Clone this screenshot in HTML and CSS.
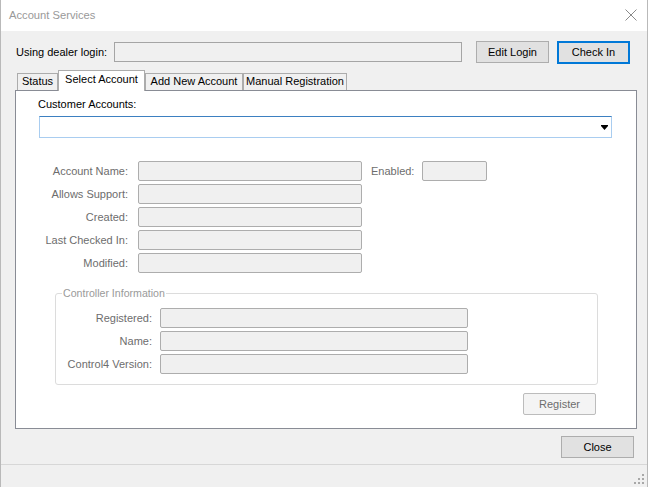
FILE: index.html
```html
<!DOCTYPE html>
<html>
<head>
<meta charset="utf-8">
<link rel="stylesheet" href="styles.css">
</head>
<body>
<div class="window">
  <div class="titlebar">
    <span class="title">Account Services</span>
    <svg class="close-x" width="12" height="12" viewBox="0 0 12 12"><path d="M0.5 0.5 L11.5 11.5 M11.5 0.5 L0.5 11.5" stroke="#8a8a8a" stroke-width="1" fill="none"/></svg>
  </div>
  <div class="client">
    <div class="login-row">
      <span class="login-label">Using dealer login:</span>
      <div class="login-box"></div>
      <button class="btn btn-edit">Edit Login</button>
      <button class="btn btn-default">Check In</button>
    </div>
    <div class="tabs">
      <div class="tab tab-status">Status</div>
      <div class="tab active">Select Account</div>
      <div class="tab tab-add">Add New Account</div>
      <div class="tab tab-manual">Manual Registration</div>
    </div>
    <div class="panel">
      <div class="cust-label">Customer Accounts:</div>
      <div class="combo">
        <svg class="combo-arrow" width="7" height="5" viewBox="0 0 7 5"><path d="M0 0 H7 V1 L3.5 5 L0 1 Z" fill="#000"/></svg>
      </div>
      <div class="fields">
        <div class="frow">
          <span class="flabel">Account Name:</span>
          <div class="dbox wide"></div>
          <span class="flabel-enabled">Enabled:</span>
          <div class="dbox narrow"></div>
        </div>
        <div class="frow"><span class="flabel">Allows Support:</span><div class="dbox wide"></div></div>
        <div class="frow"><span class="flabel">Created:</span><div class="dbox wide"></div></div>
        <div class="frow"><span class="flabel">Last Checked In:</span><div class="dbox wide"></div></div>
        <div class="frow"><span class="flabel">Modified:</span><div class="dbox wide"></div></div>
      </div>
      <fieldset class="group">
        <legend>Controller Information</legend>
        <div class="grow"><span class="glabel">Registered:</span><div class="dbox gwide"></div></div>
        <div class="grow"><span class="glabel">Name:</span><div class="dbox gwide"></div></div>
        <div class="grow"><span class="glabel">Control4 Version:</span><div class="dbox gwide"></div></div>
      </fieldset>
      <div class="register-row"><button class="btn btn-disabled">Register</button></div>
    </div>
    <div class="close-row"><button class="btn">Close</button></div>
  </div>
  <div class="statusbar">
    <svg class="grip" width="10" height="10" viewBox="0 0 10 10" fill="#a8a8a8">
      <rect x="8" y="0" width="2" height="2"/>
      <rect x="4" y="4" width="2" height="2"/><rect x="8" y="4" width="2" height="2"/>
      <rect x="0" y="8" width="2" height="2"/><rect x="4" y="8" width="2" height="2"/><rect x="8" y="8" width="2" height="2"/>
    </svg>
  </div>
</div>
</body>
</html>
```

FILE: styles.css
```css
* { box-sizing: border-box; }
html, body { margin: 0; padding: 0; }
body {
  width: 648px;
  height: 487px;
  overflow: hidden;
  font-family: "Liberation Sans", Arial, sans-serif;
  font-size: 11px;
  color: #000;
  background: #f0f0f0;
}
.window {
  width: 648px;
  height: 487px;
  display: flex;
  flex-direction: column;
  border-left: 1px solid #b9b9b9;
  border-right: 1px solid #b9b9b9;
  background: #f0f0f0;
}
.titlebar {
  height: 31px;
  flex: none;
  background: #fff;
  display: flex;
  align-items: center;
  justify-content: space-between;
  padding: 0 10px 0 8px;
}
.title {
  color: #999;
  font-size: 11.2px;
  padding-bottom: 1px;
}
.close-x { display: block; margin-top: -1px; }
.client {
  flex: 1;
  padding-top: 10px;
  display: flex;
  flex-direction: column;
}
.login-row {
  height: 22px;
  display: flex;
  align-items: center;
  padding-left: 15px;
}
.login-label { width: 98px; }
.login-box {
  width: 348px;
  height: 20px;
  background: #f0f0f0;
  border: 1px solid #a5a5a5;
}
.btn {
  font-family: "Liberation Sans", Arial, sans-serif;
  font-size: 11px;
  color: #000;
  width: 73px;
  height: 22px;
  padding: 0;
  margin: 0;
  background: #e1e1e1;
  border: 1px solid #adadad;
  border-radius: 0;
}
.btn-edit { margin-left: 14px; }
.btn-default {
  margin-left: 8px;
  border: 2px solid #0078d7;
  height: 23px;
}
.tabs {
  margin-top: 7px;
  margin-left: 16px;
  height: 20px;
  display: flex;
  align-items: flex-end;
  position: relative;
  z-index: 1;
}
.tab {
  height: 17px;
  line-height: 15px;
  border: 1px solid #acacac;
  border-bottom: none;
  background: #f0f0f0;
  text-align: center;
  white-space: nowrap;
}
.tab-status { width: 41px; }
.tab.active {
  width: 87px;
  height: 21px;
  line-height: 17px;
  margin-bottom: -1px;
  background: #fff;
  border-color: #acacac;
}
.tab-add { width: 98px; }
.tab-manual { width: 104px; }
.panel {
  margin-left: 14px;
  width: 622px;
  height: 339px;
  background: #fff;
  border: 1px solid #898c95;
  display: flex;
  flex-direction: column;
}
.cust-label {
  margin: 7px 0 0 22px;
  line-height: 13px;
}
.combo {
  margin: 5px 0 0 23px;
  width: 573px;
  height: 22px;
  border: 1px solid #a9cdf0;
  border-top-color: #3d80c1;
  display: flex;
  align-items: center;
  justify-content: flex-end;
  padding-right: 3px;
}
.combo-arrow { display: block; margin-top: 1px; }
.fields {
  margin-top: 23px;
  display: flex;
  flex-direction: column;
  gap: 3px;
}
.frow, .grow {
  display: flex;
  align-items: center;
  height: 20px;
}
.flabel, .flabel-enabled, .glabel {
  color: #6d6d6d;
  white-space: nowrap;
}
.flabel {
  width: 112px;
  text-align: right;
  margin-right: 10px;
}
.flabel-enabled { margin: 0 8px 0 9px; width: 43px; }
.dbox {
  height: 20px;
  background: #f0f0f0;
  border: 1px solid #adadad;
  border-radius: 2px;
}
.dbox.wide { width: 224px; }
.dbox.narrow { width: 65px; }
.group {
  margin: 14px 0 0 39px;
  width: 543px;
  padding: 8px 0 10px 0;
  border: 1px solid #dcdcdc;
  border-radius: 3px;
  display: flex;
  flex-direction: column;
  gap: 3px;
  min-width: 0;
}
.group legend {
  margin-left: 6px;
  padding: 0 1px;
  line-height: 13px;
  color: #9a9a9a;
  font-size: 10.6px;
}
.glabel {
  width: 96px;
  text-align: right;
  margin-right: 8px;
}
.dbox.gwide { width: 308px; }
.register-row {
  margin-top: 8px;
  display: flex;
  justify-content: flex-end;
  padding-right: 40px;
}
.btn-disabled {
  height: 22px;
  background: #f4f4f4;
  border: 1px solid #bcbcbc;
  border-radius: 2px;
  color: #6d6d6d;
}
.close-row {
  margin-top: 7px;
  display: flex;
  justify-content: flex-end;
  padding-right: 13px;
}
.statusbar {
  height: 23px;
  flex: none;
  border-top: 1px solid #d7d7d7;
  display: flex;
  align-items: flex-end;
  justify-content: flex-end;
  padding: 0 3px 3px 0;
}
.grip { display: block; }
```
